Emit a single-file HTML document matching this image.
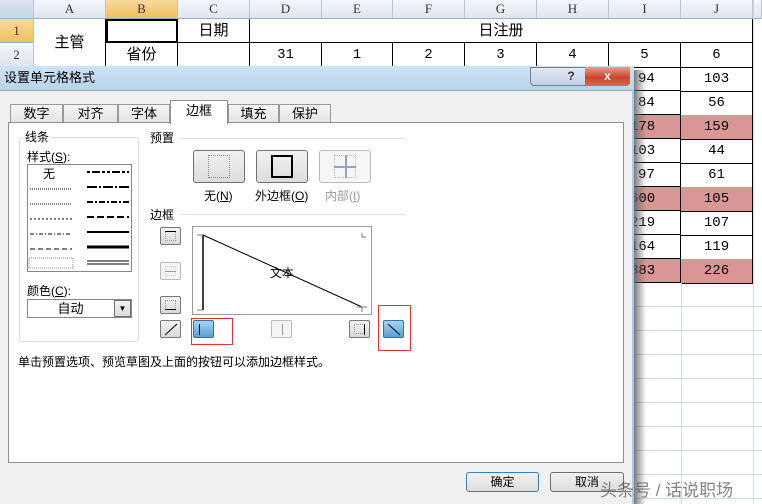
<!DOCTYPE html>
<html><head><meta charset="utf-8"><style>
*{box-sizing:border-box;margin:0;padding:0}
body{width:762px;height:504px;overflow:hidden;position:relative;background:#fff;font-family:"Liberation Sans","Noto Sans CJK SC",sans-serif;font-size:12px;color:#000}
.a{position:absolute}
.hd{background:linear-gradient(#f4f7fb,#dfe6ef);border-right:1px solid #b8c4d4;border-bottom:1px solid #9eb0c6;text-align:center;font-family:"Liberation Serif",serif;font-size:13px;color:#333;line-height:18px}
.c{border-right:1px solid #000;border-bottom:1px solid #000;text-align:center;font-family:"Liberation Mono",monospace;font-size:14px;line-height:24px}
.btn{border:1px solid #707070;border-radius:3px;background:linear-gradient(#f2f2f2,#dcdcdc)}
.sb{width:21px;height:18px;border:1px solid #777;border-radius:2px;background:linear-gradient(#f4f4f4,#d8d8d8)}
.sb.dis{border-color:#bbb;background:#f4f4f4}
.sb.sel{border-color:#3c6f9a;background:linear-gradient(#a8d4f2,#5ba0d4)}
.dot{position:absolute;left:4px;top:3px;width:11px;height:10px;border:1px dotted #999}
</style></head><body>
<div class="a hd" style="left:0;top:0;width:34px;height:19px;background:linear-gradient(#dbe3ee,#c9d5e4)"></div>
<div class="a hd" style="left:34px;top:0;width:72px;height:19px">A</div>
<div class="a hd" style="left:106px;top:0;width:72px;height:19px;background:linear-gradient(#f9d99f,#f1c05b)">B</div>
<div class="a hd" style="left:178px;top:0;width:72px;height:19px">C</div>
<div class="a hd" style="left:250px;top:0;width:72px;height:19px">D</div>
<div class="a hd" style="left:322px;top:0;width:71px;height:19px">E</div>
<div class="a hd" style="left:393px;top:0;width:72px;height:19px">F</div>
<div class="a hd" style="left:465px;top:0;width:72px;height:19px">G</div>
<div class="a hd" style="left:537px;top:0;width:72px;height:19px">H</div>
<div class="a hd" style="left:609px;top:0;width:72px;height:19px">I</div>
<div class="a hd" style="left:681px;top:0;width:72px;height:19px">J</div>
<div class="a hd" style="left:753px;top:0;width:9px;height:19px"></div>
<div class="a hd" style="left:0;top:19px;width:34px;height:24px;line-height:24px;background:linear-gradient(#f9d99f,#f1c05b)">1</div>
<div class="a hd" style="left:0;top:43px;width:34px;height:24px;line-height:24px">2</div>
<div class="a" style="left:34px;top:19px;width:72px;height:47px;border-right:1px solid #000;text-align:center;line-height:47px;font-size:15px">主管</div>
<div class="a" style="left:106px;top:19px;width:72px;height:24px;border:2px solid #000"></div>
<div class="a" style="left:106px;top:43px;width:72px;height:24px;border-right:1px solid #000;text-align:center;line-height:24px;font-size:15px">省份</div>
<div class="a" style="left:178px;top:19px;width:72px;height:24px;border-right:1px solid #000;border-bottom:1px solid #000;text-align:center;line-height:24px;font-size:15px">日期</div>
<div class="a" style="left:178px;top:43px;width:72px;height:24px;border-right:1px solid #000"></div>
<div class="a" style="left:250px;top:19px;width:503px;height:24px;border-right:1px solid #000;border-bottom:1px solid #000;text-align:center;line-height:24px;font-size:15px">日注册</div>
<div class="a c" style="left:250px;top:43px;width:72px">31</div>
<div class="a c" style="left:322px;top:43px;width:71px">1</div>
<div class="a c" style="left:393px;top:43px;width:72px">2</div>
<div class="a c" style="left:465px;top:43px;width:72px">3</div>
<div class="a c" style="left:537px;top:43px;width:72px">4</div>
<div class="a c" style="left:609px;top:43px;width:72px">5</div>
<div class="a c" style="left:681px;top:43px;width:72px">6</div>
<div class="a c" style="left:609px;top:67px;width:72px;height:24px;text-align:left;padding-left:29px">94</div><div class="a c" style="left:681px;top:67px;width:72px">103</div>
<div class="a c" style="left:609px;top:91px;width:72px;height:24px;text-align:left;padding-left:29px">84</div><div class="a c" style="left:681px;top:91px;width:72px">56</div>
<div class="a c" style="left:609px;top:115px;width:72px;height:24px;text-align:left;padding-left:21px;background:#da9694">178</div><div class="a c" style="left:681px;top:115px;width:72px;background:#da9694">159</div>
<div class="a c" style="left:609px;top:139px;width:72px;height:24px;text-align:left;padding-left:21px">103</div><div class="a c" style="left:681px;top:139px;width:72px">44</div>
<div class="a c" style="left:609px;top:163px;width:72px;height:24px;text-align:left;padding-left:29px">97</div><div class="a c" style="left:681px;top:163px;width:72px">61</div>
<div class="a c" style="left:609px;top:187px;width:72px;height:24px;text-align:left;padding-left:21px;background:#da9694">600</div><div class="a c" style="left:681px;top:187px;width:72px;background:#da9694">105</div>
<div class="a c" style="left:609px;top:211px;width:72px;height:24px;text-align:left;padding-left:21px">219</div><div class="a c" style="left:681px;top:211px;width:72px">107</div>
<div class="a c" style="left:609px;top:235px;width:72px;height:24px;text-align:left;padding-left:21px">164</div><div class="a c" style="left:681px;top:235px;width:72px">119</div>
<div class="a c" style="left:609px;top:259px;width:72px;height:24px;text-align:left;padding-left:21px;background:#da9694">383</div><div class="a c" style="left:681px;top:259px;width:72px;background:#da9694">226</div>
<div class="a" style="left:681px;top:283px;width:1px;height:221px;background:#d0d7e5"></div>
<div class="a" style="left:753px;top:0;width:1px;height:504px;background:#d0d7e5"></div>
<div class="a" style="left:636px;top:306px;width:126px;height:1px;background:#d0d7e5"></div>
<div class="a" style="left:636px;top:330px;width:126px;height:1px;background:#d0d7e5"></div>
<div class="a" style="left:636px;top:354px;width:126px;height:1px;background:#d0d7e5"></div>
<div class="a" style="left:636px;top:378px;width:126px;height:1px;background:#d0d7e5"></div>
<div class="a" style="left:636px;top:402px;width:126px;height:1px;background:#d0d7e5"></div>
<div class="a" style="left:636px;top:426px;width:126px;height:1px;background:#d0d7e5"></div>
<div class="a" style="left:636px;top:450px;width:126px;height:1px;background:#d0d7e5"></div>
<div class="a" style="left:636px;top:474px;width:126px;height:1px;background:#d0d7e5"></div>
<div class="a" style="left:636px;top:498px;width:126px;height:1px;background:#d0d7e5"></div>
<div class="a" style="left:632px;top:70px;width:14px;height:434px;background:linear-gradient(90deg,#666,rgba(0,0,0,0))"></div>
<div class="a" style="left:0;top:66px;width:634px;height:438px;background:#c5dcf0;border-right:3px solid #a9c9e8"></div>
<div class="a" style="left:0;top:66px;width:634px;height:24px;background:linear-gradient(#cfe3f5,#b8d3ec);font-size:13px;line-height:24px;padding-left:4px">设置单元格格式</div>
<div class="a" style="left:530px;top:67px;width:100px;height:19px;border:1px solid #6d8099;border-radius:0 0 4px 4px;background:linear-gradient(#e0e8f2,#c2d0e0)"></div>
<div class="a" style="left:558px;top:67px;width:26px;height:19px;text-align:center;color:#333;font-weight:bold;line-height:18px">?</div>
<div class="a" style="left:585px;top:67px;width:45px;height:19px;border-radius:0 0 4px 0;background:linear-gradient(#e8a08e,#c8452c 55%,#d66a4e);text-align:center;color:#fff;font-weight:bold;line-height:18px">x</div>
<div class="a" style="left:0;top:90px;width:632px;height:414px;background:#f0f0f0;border-top:1px solid #8aa"></div>
<div class="a" style="left:10px;top:104px;width:53px;height:19px;border:1px solid #999;background:linear-gradient(#f6f6f6,#e3e3e3);text-align:center;line-height:18px;font-size:13px">数字</div>
<div class="a" style="left:63px;top:104px;width:55px;height:19px;border:1px solid #999;background:linear-gradient(#f6f6f6,#e3e3e3);text-align:center;line-height:18px;font-size:13px">对齐</div>
<div class="a" style="left:118px;top:104px;width:52px;height:19px;border:1px solid #999;background:linear-gradient(#f6f6f6,#e3e3e3);text-align:center;line-height:18px;font-size:13px">字体</div>
<div class="a" style="left:228px;top:104px;width:51px;height:19px;border:1px solid #999;background:linear-gradient(#f6f6f6,#e3e3e3);text-align:center;line-height:18px;font-size:13px">填充</div>
<div class="a" style="left:279px;top:104px;width:52px;height:19px;border:1px solid #999;background:linear-gradient(#f6f6f6,#e3e3e3);text-align:center;line-height:18px;font-size:13px">保护</div>
<div class="a" style="left:8px;top:122px;width:616px;height:341px;background:#fff;border:1px solid #8e8f8f"></div>
<div class="a" style="left:170px;top:100px;width:58px;height:24px;border:1px solid #8e8f8f;border-bottom:none;background:#fff;text-align:center;line-height:20px;font-size:13px">边框</div>
<div class="a" style="left:19px;top:137px;width:120px;height:205px;border:1px solid #d5dfe5;border-radius:3px"></div>
<div class="a" style="left:23px;top:128px;background:#fff;padding:0 2px">线条</div>
<div class="a" style="left:27px;top:148px">样式(<u>S</u>):</div>
<div class="a" style="left:27px;top:164px;width:105px;height:108px;border:1px solid #828790"></div>
<div class="a" style="left:43px;top:165px">无</div>
<svg class="a" style="left:27px;top:164px" width="105" height="108">
<g stroke="#000" fill="none">
<line x1="3" y1="40" x2="45" y2="40" stroke-dasharray="1 1"/>
<line x1="3" y1="55" x2="45" y2="55" stroke-dasharray="2 2"/>
<line x1="3" y1="70" x2="45" y2="70" stroke-dasharray="4 2 1 2"/>
<line x1="3" y1="85" x2="45" y2="85" stroke-dasharray="5 3"/>
<line x1="3" y1="25" x2="45" y2="25" stroke-dasharray="1 1"/>
<rect x="2" y="94" width="44" height="10" stroke="#888" stroke-dasharray="1 1"/>
<line x1="60" y1="8" x2="102" y2="8" stroke-width="2" stroke-dasharray="3 2 8 2 3 2"/>
<line x1="60" y1="23" x2="102" y2="23" stroke-width="2" stroke-dasharray="10 2 2 2"/>
<line x1="60" y1="38" x2="102" y2="38" stroke-width="2" stroke-dasharray="6 2 2 2"/>
<line x1="60" y1="53" x2="102" y2="53" stroke-width="2" stroke-dasharray="7 3"/>
<line x1="60" y1="68" x2="102" y2="68" stroke-width="2"/>
<line x1="60" y1="83" x2="102" y2="83" stroke-width="3"/>
<line x1="60" y1="97" x2="102" y2="97"/><line x1="60" y1="100" x2="102" y2="100"/>
</g></svg>
<div class="a" style="left:27px;top:282px">颜色(<u>C</u>):</div>
<div class="a" style="left:27px;top:299px;width:105px;height:19px;border:1px solid #828790;text-align:center;line-height:17px;font-size:13px;padding-right:18px">自动</div>
<div class="a" style="left:114px;top:300px;width:17px;height:17px;border:1px solid #707070;background:linear-gradient(#f2f2f2,#dcdcdc);font-size:8px;text-align:center;line-height:16px">▼</div>
<div class="a" style="left:150px;top:129px">预置</div>
<div class="a" style="left:180px;top:138px;width:226px;height:1px;background:#dde3e8"></div>
<div class="a btn" style="left:193px;top:150px;width:52px;height:33px"><div class="a" style="left:14px;top:4px;width:22px;height:23px;border:1px dotted #888"></div></div>
<div class="a btn" style="left:256px;top:150px;width:52px;height:33px"><div class="a" style="left:14px;top:4px;width:22px;height:23px;border:2px solid #000"></div></div>
<div class="a" style="left:319px;top:150px;width:52px;height:33px;border:1px solid #bbb;border-radius:3px;background:#f6f6f6"><div class="a" style="left:14px;top:4px;width:22px;height:23px;border:1px dotted #bbb"></div><div class="a" style="left:25px;top:4px;width:2px;height:23px;background:#8fa3c4"></div><div class="a" style="left:14px;top:15px;width:22px;height:2px;background:#8fa3c4"></div></div>
<div class="a" style="left:204px;top:187px">无(<u>N</u>)</div>
<div class="a" style="left:255px;top:187px">外边框(<u>O</u>)</div>
<div class="a" style="left:325px;top:187px;color:#999">内部(<u>I</u>)</div>
<div class="a" style="left:150px;top:206px">边框</div>
<div class="a" style="left:180px;top:214px;width:226px;height:1px;background:#dde3e8"></div>
<div class="a sb" style="left:160px;top:227px"><div class="dot"></div><div class="a" style="left:4px;top:3px;width:11px;height:1px;background:#000"></div></div>
<div class="a sb dis" style="left:160px;top:262px"><div class="dot" style="border-color:#ccc"></div><div class="a" style="left:4px;top:8px;width:11px;height:1px;background:#999"></div></div>
<div class="a sb" style="left:160px;top:296px"><div class="dot"></div><div class="a" style="left:4px;top:12px;width:11px;height:1px;background:#000"></div></div>
<div class="a sb" style="left:160px;top:320px"><svg class="a" style="left:3px;top:2px" width="14" height="13"><line x1="1" y1="12" x2="13" y2="1" stroke="#000"/></svg></div>
<div class="a" style="left:192px;top:226px;width:180px;height:89px;border:1px solid #999"></div>
<svg class="a" style="left:192px;top:226px" width="180" height="89"><g stroke="#000" fill="none"><line x1="11" y1="9" x2="11" y2="84" stroke-width="1.5"/><line x1="11" y1="9" x2="170" y2="81"/><path d="M5 9H11M5 84H11M170 81V86M165 81H175M170 7V11H174" stroke="#777"/></g></svg>
<div class="a" style="left:270px;top:264px">文本</div>
<div class="a sb sel" style="left:193px;top:320px"><div class="a" style="left:5px;top:3px;width:1px;height:11px;background:#000"></div></div>
<div class="a sb dis" style="left:271px;top:320px"><div class="a" style="left:10px;top:3px;width:1px;height:11px;background:#999"></div></div>
<div class="a sb" style="left:349px;top:320px"><div class="dot"></div><div class="a" style="left:14px;top:3px;width:1px;height:11px;background:#000"></div></div>
<div class="a sb sel" style="left:383px;top:320px"><svg class="a" style="left:3px;top:2px" width="14" height="13"><line x1="1" y1="1" x2="13" y2="12" stroke="#000"/></svg></div>
<div class="a" style="left:191px;top:318px;width:42px;height:27px;border:1px solid #d33"></div>
<div class="a" style="left:378px;top:305px;width:33px;height:46px;border:1px solid #d33"></div>
<div class="a" style="left:18px;top:353px">单击预置选项、预览草图及上面的按钮可以添加边框样式。</div>
<div class="a btn" style="left:466px;top:472px;width:73px;height:20px;border-color:#3c7fb1;text-align:center;line-height:18px">确定</div>
<div class="a btn" style="left:550px;top:472px;width:74px;height:20px;text-align:center;line-height:18px">取消</div>
<div class="a" style="left:600px;top:476px;font-size:17px;color:rgba(90,90,90,.75)">头条号 / 话说职场</div>
</body></html>
